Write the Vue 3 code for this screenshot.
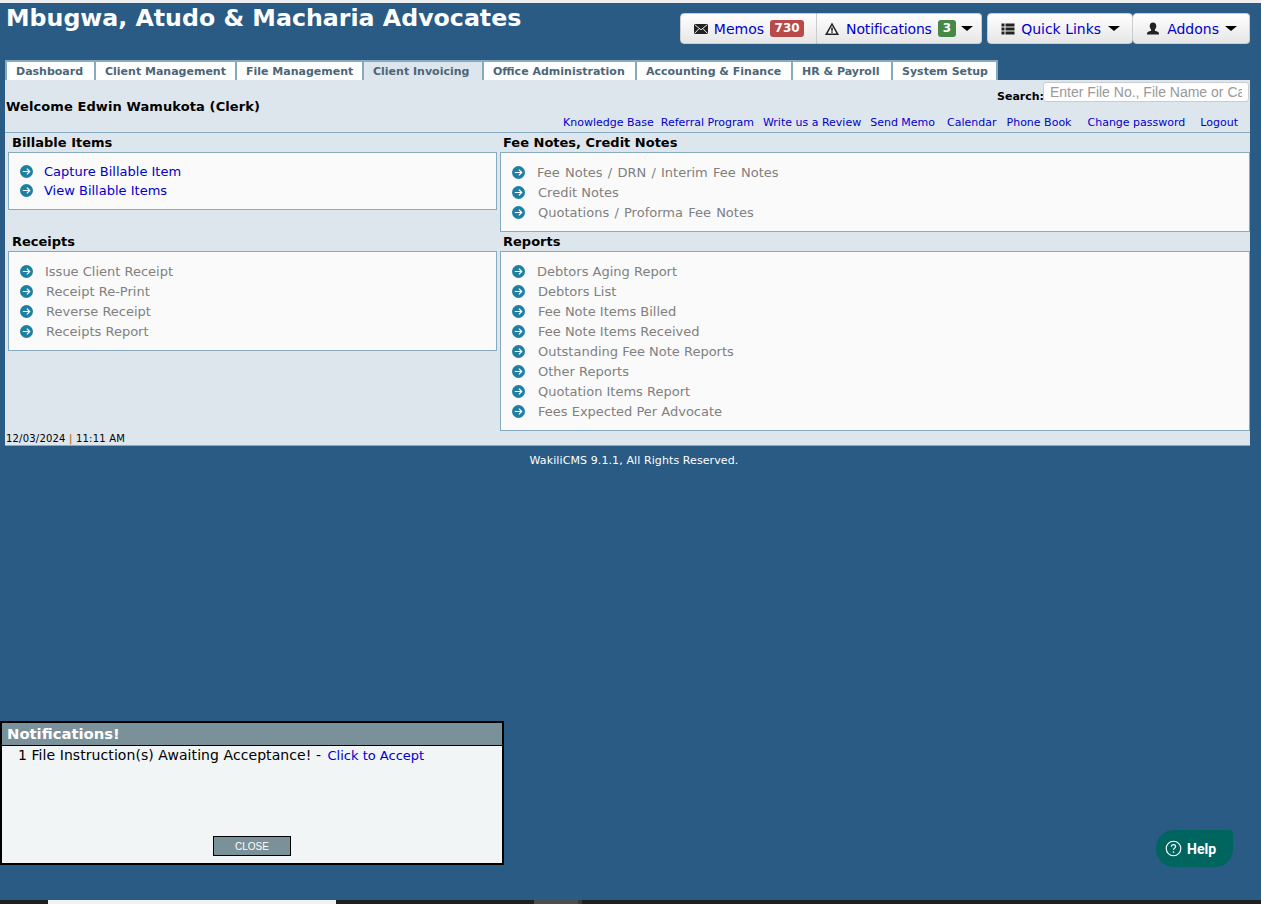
<template>
  <div class="page">
    <div class="top-strip"></div>
    <header class="site-head">
      <h1>Mbugwa, Atudo &amp; Macharia Advocates</h1>
      <div class="head-btns">
        <div class="btn-group">
          <a class="btn b-memos" href="#">
            <svg class="ico" viewBox="0 0 14 14"><path d="M0 2h14v10H0z" fill="#222" /><path d="M.5 2.500 7 7.800l6.500-5.300M.5 11.500 5.200 6.500M13.500 11.500 8.800 6.500" stroke="#fff" stroke-width=".9" fill="none" /></svg>
            <span class="lbl">Memos</span>
            <span class="badge red">730</span>
          </a>
          <a class="btn b-notes" href="#">
            <svg class="ico" viewBox="0 0 14 14"><path d="M7 .5 14 13H0z" fill="#222" /><path d="M7 3.500 11.400 11.500H2.600z" fill="#fff" /><path d="M6.200 5.500h1.600v3.300H6.200zM6.200 9.300h1.600v1.500H6.200z" fill="#222" /></svg>
            <span class="lbl tight">Notifications</span>
            <span class="badge green">3</span>
            <span class="caret"></span>
          </a>
        </div>
        <div class="btn-group joined">
          <a class="btn b-quick" href="#">
            <svg class="ico" viewBox="0 0 14 14"><path d="M.5 1.500h3v3h-3zM4.500 1.500h9v3h-9zM.5 5.500h3v3h-3zM4.500 5.500h9v3h-9zM.5 9.500h3v3h-3zM4.500 9.500h9v3h-9z" fill="#222" /></svg>
            <span class="lbl">Quick Links</span>
            <span class="caret"></span>
          </a>
          <a class="btn b-addons" href="#">
            <svg class="ico" viewBox="0 0 14 14"><path d="M7 .5c2.200 0 3.300 1.600 3.300 3.500 0 1.500-.6 2.800-1.400 3.500v1.300c2.200.6 4.100 1.200 4.100 2.600v1.100H1v-1.100c0-1.400 1.900-2 4.100-2.600V7.500C4.300 6.800 3.700 5.500 3.700 4 3.700 2.100 4.800.5 7 .5z" fill="#222" /></svg>
            <span class="lbl">Addons</span>
            <span class="caret"></span>
          </a>
        </div>
      </div>
    </header>

    <nav class="tabs">
      <a v-for="t in tabs" :key="t.name" href="#" class="tab" :class="{ active: t.name === 'Client Invoicing' }" :style="{ width: t.width + 'px' }">{{ t.name }}</a>
    </nav>

    <main class="panel">
      <div class="panel-top">
        <div class="welcome">Welcome Edwin Wamukota (Clerk)</div>
        <div class="top-right">
          <div class="search">
            <label>Search:</label>
            <input type="text" placeholder="Enter File No., File Name or Case No." />
          </div>
          <div class="quick-links">
            <a v-for="l in quickLinks" :key="l.text" href="#" :style="{ marginLeft: l.gap + 'px' }">{{ l.text }}</a>
          </div>
        </div>
      </div>

      <div class="sections">
        <section v-for="s in sections" :key="s.title" class="section">
          <h3>{{ s.title }}</h3>
          <ul class="box" :class="s.cls">
            <li v-for="i in s.items" :key="i">
              <svg class="arrow" viewBox="0 0 14 14">
                <circle cx="7" cy="7" r="7" fill="#1f7fa3" />
                <path d="M3 7h7.500M7.400 3.900 10.500 7 7.400 10.100" stroke="#fff" stroke-width="1.300" fill="none" />
              </svg>
              <a href="#" :class="{ off: !s.live, slashed: i.includes('/') }">{{ i }}</a>
            </li>
          </ul>
        </section>
      </div>

      <div class="stamp">12/03/2024 <span>|</span> 11:11 AM</div>
    </main>

    <footer class="foot">WakiliCMS 9.1.1, All Rights Reserved.</footer>

    <div class="notice">
      <div class="notice-head">Notifications!</div>
      <div class="notice-body">1 File Instruction(s) Awaiting Acceptance! - <a href="#">Click to Accept</a></div>
      <div class="notice-foot"><button type="button">CLOSE</button></div>
    </div>

    <a class="help" href="#">
      <svg viewBox="0 0 18 18" width="17" height="17"><circle cx="9" cy="9" r="7.700" fill="none" stroke="#fff" stroke-width="1.200" /><path d="M6.800 7.100c0-1.300 1-2.100 2.200-2.100s2.200.8 2.200 2c0 1.700-2.200 1.700-2.200 3.300" fill="none" stroke="#fff" stroke-width="1.300" /><circle cx="9" cy="12.700" r=".9" fill="#fff" /></svg>
      <span>Help</span>
    </a>

    <div class="taskbar"><i class="tb-white"></i><i class="tb-grey"></i><i class="tb-dim"></i></div>
  </div>
</template>

<script setup>
const tabs = [
  { name: 'Dashboard', width: 89 },
  { name: 'Client Management', width: 141 },
  { name: 'File Management', width: 127 },
  { name: 'Client Invoicing', width: 120 },
  { name: 'Office Administration', width: 153 },
  { name: 'Accounting & Finance', width: 156 },
  { name: 'HR & Payroll', width: 100 },
  { name: 'System Setup', width: 107 }
]

const quickLinks = [
  { text: 'Knowledge Base', gap: 0 },
  { text: 'Referral Program', gap: 7 },
  { text: 'Write us a Review', gap: 9 },
  { text: 'Send Memo', gap: 9 },
  { text: 'Calendar', gap: 12 },
  { text: 'Phone Book', gap: 10 },
  { text: 'Change password', gap: 16 },
  { text: 'Logout', gap: 15 }
]

const sections = [
  { title: 'Billable Items', live: true, cls: 'short', items: ['Capture Billable Item', 'View Billable Items'] },
  { title: 'Fee Notes, Credit Notes', live: false, cls: 'full', items: ['Fee Notes / DRN / Interim Fee Notes', 'Credit Notes', 'Quotations / Proforma Fee Notes'] },
  { title: 'Receipts', live: false, cls: 'left', items: ['Issue Client Receipt', 'Receipt Re-Print', 'Reverse Receipt', 'Receipts Report'] },
  { title: 'Reports', live: false, cls: 'full', items: ['Debtors Aging Report', 'Debtors List', 'Fee Note Items Billed', 'Fee Note Items Received', 'Outstanding Fee Note Reports', 'Other Reports', 'Quotation Items Report', 'Fees Expected Per Advocate'] }
]
</script>

<style>
html, body {
  margin: 0;
  background: #295b85;
}
</style>

<style scoped>
.page {
  height: 904px;
  overflow: hidden;
  background: #295b85;
  font-family: "DejaVu Sans", Verdana, sans-serif;
  color: #000;
}

.top-strip {
  height: 3px;
  background: #eceef0;
}

.site-head {
  display: flex;
  justify-content: space-between;
  height: 57px;
  padding: 0 11px 0 6px;
}

h1 {
  margin: 0;
  font-size: 23.700px;
  line-height: 31px;
  color: #fff;
  font-weight: bold;
}

.head-btns {
  display: flex;
  gap: 5px;
  margin-top: 10px;
  height: 31px;
}

.btn-group {
  display: flex;
}

.btn {
  display: flex;
  align-items: center;
  background: linear-gradient(#ffffff, #e6e6e6);
  border: 1px solid #ccc;
  text-decoration: none;
  color: #0000cc;
  font-size: 14px;
}

.btn-group .btn:first-child {
  border-radius: 4px 0 0 4px;
}

.btn-group .btn:last-child {
  border-radius: 0 4px 4px 0;
  border-left: 0;
}

.btn-group.joined .btn {
  border-radius: 4px;
}

.b-memos { padding: 0 12px 0 13px; }
.b-notes { padding: 0 8px 0 8px; }
.b-quick { padding: 0 12px 0 13px; }
.b-addons { padding: 0 12px 0 13px; }

.ico {
  width: 14px;
  height: 14px;
  margin-right: 6px;
}

.b-notes .ico, .b-addons .ico {
  margin-right: 7px;
}

.lbl.tight {
  letter-spacing: -0.15px;
}

.badge {
  margin-left: 6px;
  padding: 1px 4.500px;
  border-radius: 3px;
  color: #fff;
  font-size: 12px;
  line-height: 15px;
  font-weight: bold;
}

.green { padding: 1px 5px; }
.red { background: #b94a48; }
.green { background: #468847; }

.caret {
  margin-left: 6px;
  border-left: 6px solid transparent;
  border-right: 6px solid transparent;
  border-top: 5px solid #000;
}

.b-notes .caret { margin-left: 5px; }
.b-quick .caret { margin-left: 7px; }

.tabs {
  display: flex;
  height: 20px;
  padding-left: 5px;
}

.tab {
  box-sizing: border-box;
  padding-left: 9px;
  background: #fff;
  border: 2px solid #86abc0;
  border-bottom: 0;
  border-right-width: 0;
  color: #4c6678;
  font-size: 11px;
  font-weight: bold;
  line-height: 20px;
  text-decoration: none;
  white-space: nowrap;
}

.tab:last-child {
  border-right-width: 2px;
}

.tab.active {
  background: #dee6ed;
}

.panel {
  margin: 0 11px 0 5px;
  background: #dee6ed;
  border-bottom: 1px solid #86abc0;
}

.panel-top {
  display: flex;
  justify-content: space-between;
  height: 52px;
  border-bottom: 1px solid #86abc0;
}

.welcome {
  padding: 19px 0 0 1px;
  font-size: 13px;
  font-weight: bold;
  letter-spacing: 0.1px;
}

.top-right {
  display: flex;
  flex-direction: column;
  align-items: flex-end;
}

.search {
  display: flex;
  align-items: flex-start;
  margin: 2px 1px 0 0;
  font-size: 11px;
  font-weight: bold;
}

.search label {
  padding-top: 8px;
  margin-right: -1px;
}

.search input {
  width: 206px;
  height: 20px;
  box-sizing: border-box;
  padding: 0 6px;
  border: 1px solid #ccc;
  border-radius: 3px;
  background: #fff;
  font-family: "Liberation Sans", Arial, sans-serif;
  font-size: 14px;
}

.search input::placeholder {
  color: #999;
}

.quick-links {
  margin-top: 13px;
  padding-right: 12px;
  font-size: 11px;
}

.quick-links a {
  color: #0000cc;
  text-decoration: none;
}

.sections {
  display: grid;
  grid-template-columns: 495px 750px;
  grid-template-rows: 99px 199px;
}

.section h3 {
  margin: 0;
  padding-left: 7px;
  height: 19px;
  font-size: 13px;
  line-height: 19px;
  font-weight: bold;
}

.section:nth-child(even) h3 {
  padding-left: 3px;
}

.box {
  list-style: none;
  margin: 0;
  padding: 9px 0 9px 11px;
  background: #fafafa;
  border: 1px solid #86abc0;
}

.box.short, .box.left {
  margin: 0 3px;
  box-sizing: border-box;
  width: 489px;
}

.box.short {
  height: 58px;
}

.box.short li {
  height: 19px;
}

.box li {
  display: flex;
  align-items: center;
  height: 20px;
}

.arrow {
  width: 13px;
  height: 13px;
  margin-right: 12px;
}

.box li + li .arrow {
  margin-right: 13px;
}

.box.short li .arrow {
  margin-right: 11px;
}

.box a {
  color: #0000cc;
  font-size: 13px;
  text-decoration: none;
}

.box a.off {
  color: #808080;
}

.box a.slashed {
  word-spacing: 1.100px;
}

.stamp {
  height: 14px;
  padding: 1px 0 0 1px;
  box-sizing: border-box;
  font-size: 10px;
  line-height: 14px;
  letter-spacing: 0.2px;
}

.stamp span {
  color: #a06000;
}

.foot {
  margin-top: 8px;
  width: 1268px;
  text-align: center;
  color: #fff;
  font-size: 11px;
  line-height: 14px;
  letter-spacing: 0.1px;
}

.notice {
  position: fixed;
  left: 0;
  top: 721px;
  width: 504px;
  height: 144px;
  box-sizing: border-box;
  display: flex;
  flex-direction: column;
  border: 2px solid #000;
  background: #f1f5f6;
}

.notice-head {
  height: 22px;
  padding-left: 5px;
  background: #7b9199;
  border-bottom: 1px solid #000;
  color: #fff;
  font-size: 14.800px;
  font-weight: bold;
  line-height: 22px;
}

.notice-body {
  padding-left: 16px;
  font-size: 14px;
  line-height: 19px;
  letter-spacing: 0.07px;
}

.notice-body a {
  margin-left: 2px;
  color: #0000cc;
  font-size: 13px;
  letter-spacing: 0;
  text-decoration: none;
}

.notice-foot {
  margin-top: auto;
  padding-bottom: 7px;
  text-align: center;
}

.notice-foot button {
  width: 78px;
  height: 20px;
  padding: 0;
  background: #7b9199;
  border: 1px solid #000;
  color: #fff;
  font-family: "Liberation Sans", Arial, sans-serif;
  font-size: 10px;
}

.help {
  position: fixed;
  left: 1156px;
  top: 830px;
  width: 77px;
  height: 37px;
  box-sizing: border-box;
  display: flex;
  align-items: center;
  gap: 5px;
  padding-left: 9px;
  background: #00645f;
  border-radius: 18px 4px 18px 18px;
  color: #fff;
  font-family: Roboto, "Liberation Sans", sans-serif;
  font-size: 14px;
  font-weight: bold;
  text-decoration: none;
}

.taskbar {
  position: fixed;
  left: 0;
  right: 0;
  bottom: 0;
  height: 4px;
  background: #202020;
}

.taskbar i {
  position: absolute;
  height: 4px;
}

.tb-white {
  left: 48px;
  width: 288px;
  background: #f2f2f2;
}

.tb-grey {
  left: 534px;
  width: 44px;
  background: #4d4d4d;
}

.tb-dim {
  left: 578px;
  width: 4px;
  background: #3a3a3a;
}
</style>
